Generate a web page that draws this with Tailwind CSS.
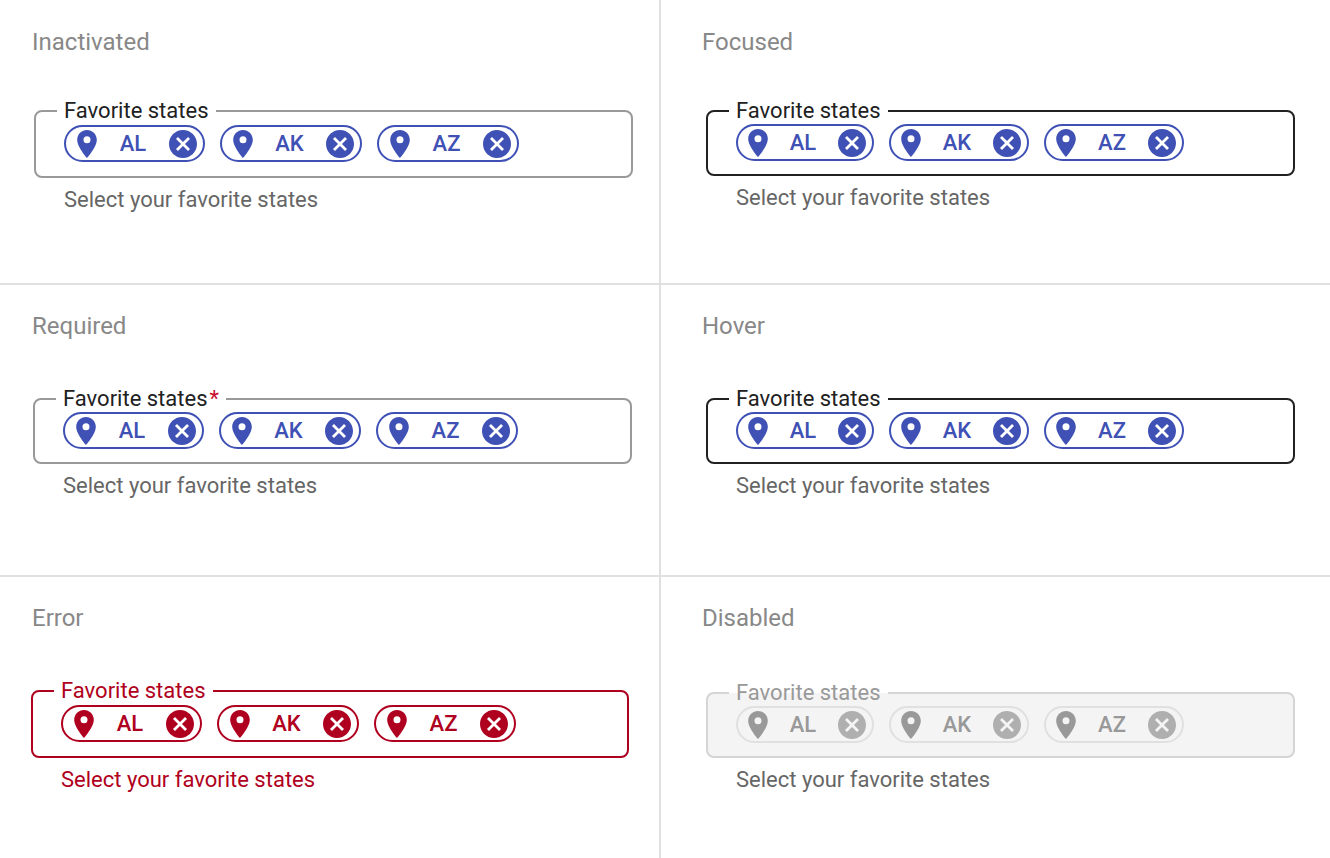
<!DOCTYPE html>
<html lang="en">
<head>
<meta charset="utf-8">
<meta name="viewport" content="width=device-width, initial-scale=1">
<title>Chip field states</title>
<script src="https://cdn.jsdelivr.net/npm/@tailwindcss/browser@4"></script>
</head>
<body class="bg-white font-[Roboto,sans-serif] text-[#212121]">
<svg class="hidden" aria-hidden="true">
  <symbol id="pin" viewBox="5 2 14 20"><path fill="currentColor" d="M12 2C8.13 2 5 5.13 5 9c0 5.25 7 13 7 13s7-7.75 7-13c0-3.87-3.13-7-7-7zm0 9.5a2.5 2.5 0 0 1 0-5 2.5 2.5 0 0 1 0 5z"/></symbol>
  <symbol id="cancel" viewBox="2 2 20 20"><path fill="currentColor" d="M12 2C6.47 2 2 6.47 2 12s4.470 10 10 10 10-4.470 10-10S17.530 2 12 2zm5 13.590L15.590 17 12 13.410 8.410 17 7 15.590 10.590 12 7 8.410 8.410 7 12 10.590 15.590 7 17 8.410 13.410 12 17 15.590z"/></symbol>
</svg>
<main class="grid min-h-screen grid-cols-[661fr_669fr] grid-rows-[285px_292px_1fr]">

  <section class="border-r-2 border-b-2 border-[#e0e0e0] pt-[26px] pr-[26px] pl-8">
    <h2 class="text-2xl text-[#888888]">Inactivated</h2>
    <fieldset class="mt-[41px] ml-[2px] rounded-lg border-2 border-[#999999] px-[21px] pt-[2px] pb-[14px]" aria-describedby="h1">
      <legend class="px-[7px] text-[22px] leading-6">Favorite states</legend>
      <ul class="ml-[7px] flex gap-[15px] text-[22px] leading-6 font-medium text-[#3f51b5]">
        <li class="flex h-[37px] w-[141px] items-center rounded-full border-2 border-[#3f51b5] pr-[6px] pl-[11px]"><svg class="h-7 w-5" aria-hidden="true"><use href="#pin"/></svg><span class="flex-1 text-center">AL</span><button type="button" aria-label="Remove AL"><svg class="size-7"><use href="#cancel"/></svg></button></li>
        <li class="flex h-[37px] w-[142px] items-center rounded-full border-2 border-[#3f51b5] pr-[6px] pl-[11px]"><svg class="h-7 w-5" aria-hidden="true"><use href="#pin"/></svg><span class="flex-1 text-center">AK</span><button type="button" aria-label="Remove AK"><svg class="size-7"><use href="#cancel"/></svg></button></li>
        <li class="flex h-[37px] w-[142px] items-center rounded-full border-2 border-[#3f51b5] pr-[6px] pl-[11px]"><svg class="h-7 w-5" aria-hidden="true"><use href="#pin"/></svg><span class="flex-1 text-center">AZ</span><button type="button" aria-label="Remove AZ"><svg class="size-7"><use href="#cancel"/></svg></button></li>
      </ul>
    </fieldset>
    <p id="h1" class="mt-[10px] ml-8 text-[22px] leading-6 text-[#666666]">Select your favorite states</p>
  </section>

  <section class="border-b-2 border-[#e0e0e0] pt-[26px] pr-[35px] pl-[41px]">
    <h2 class="text-2xl text-[#888888]">Focused</h2>
    <fieldset class="mt-[41px] ml-1 rounded-lg border-2 border-[#212121] px-[21px] pt-px pb-[13px]" aria-describedby="h2">
      <legend class="px-[7px] text-[22px] leading-6">Favorite states</legend>
      <ul class="ml-[7px] flex gap-[15px] text-[22px] leading-6 font-medium text-[#3f51b5]">
        <li class="flex h-[37px] w-[138px] items-center rounded-full border-2 border-[#3f51b5] pr-[6px] pl-[10px]"><svg class="h-7 w-5" aria-hidden="true"><use href="#pin"/></svg><span class="flex-1 text-center">AL</span><button type="button" aria-label="Remove AL"><svg class="size-7"><use href="#cancel"/></svg></button></li>
        <li class="flex h-[37px] w-[140px] items-center rounded-full border-2 border-[#3f51b5] pr-[6px] pl-[10px]"><svg class="h-7 w-5" aria-hidden="true"><use href="#pin"/></svg><span class="flex-1 text-center">AK</span><button type="button" aria-label="Remove AK"><svg class="size-7"><use href="#cancel"/></svg></button></li>
        <li class="flex h-[37px] w-[140px] items-center rounded-full border-2 border-[#3f51b5] pr-[6px] pl-[10px]"><svg class="h-7 w-5" aria-hidden="true"><use href="#pin"/></svg><span class="flex-1 text-center">AZ</span><button type="button" aria-label="Remove AZ"><svg class="size-7"><use href="#cancel"/></svg></button></li>
      </ul>
    </fieldset>
    <p id="h2" class="mt-[10px] ml-[34px] text-[22px] leading-6 text-[#666666]">Select your favorite states</p>
  </section>

  <section class="border-r-2 border-b-2 border-[#e0e0e0] pt-[25px] pr-[27px] pl-8">
    <h2 class="text-2xl text-[#888888]">Required</h2>
    <fieldset class="mt-[45px] ml-px rounded-lg border-2 border-[#999999] px-[21px] pt-px pb-[13px]" aria-describedby="h3">
      <legend class="px-[7px] text-[22px] leading-6">Favorite states<span class="ml-[2px] text-[#c8102e]">*</span></legend>
      <ul class="ml-[7px] flex gap-[15px] text-[22px] leading-6 font-medium text-[#3f51b5]">
        <li class="flex h-[37px] w-[141px] items-center rounded-full border-2 border-[#3f51b5] pr-[6px] pl-[11px]"><svg class="h-7 w-5" aria-hidden="true"><use href="#pin"/></svg><span class="flex-1 text-center">AL</span><button type="button" aria-label="Remove AL"><svg class="size-7"><use href="#cancel"/></svg></button></li>
        <li class="flex h-[37px] w-[142px] items-center rounded-full border-2 border-[#3f51b5] pr-[6px] pl-[11px]"><svg class="h-7 w-5" aria-hidden="true"><use href="#pin"/></svg><span class="flex-1 text-center">AK</span><button type="button" aria-label="Remove AK"><svg class="size-7"><use href="#cancel"/></svg></button></li>
        <li class="flex h-[37px] w-[142px] items-center rounded-full border-2 border-[#3f51b5] pr-[6px] pl-[11px]"><svg class="h-7 w-5" aria-hidden="true"><use href="#pin"/></svg><span class="flex-1 text-center">AZ</span><button type="button" aria-label="Remove AZ"><svg class="size-7"><use href="#cancel"/></svg></button></li>
      </ul>
    </fieldset>
    <p id="h3" class="mt-[10px] ml-[31px] text-[22px] leading-6 text-[#666666]">Select your favorite states</p>
  </section>

  <section class="border-b-2 border-[#e0e0e0] pt-[25px] pr-[35px] pl-[41px]">
    <h2 class="text-2xl text-[#888888]">Hover</h2>
    <fieldset class="mt-[45px] ml-1 rounded-lg border-2 border-[#212121] px-[21px] pt-px pb-[13px]" aria-describedby="h4">
      <legend class="px-[7px] text-[22px] leading-6">Favorite states</legend>
      <ul class="ml-[7px] flex gap-[15px] text-[22px] leading-6 font-medium text-[#3f51b5]">
        <li class="flex h-[37px] w-[138px] items-center rounded-full border-2 border-[#3f51b5] pr-[6px] pl-[10px]"><svg class="h-7 w-5" aria-hidden="true"><use href="#pin"/></svg><span class="flex-1 text-center">AL</span><button type="button" aria-label="Remove AL"><svg class="size-7"><use href="#cancel"/></svg></button></li>
        <li class="flex h-[37px] w-[140px] items-center rounded-full border-2 border-[#3f51b5] pr-[6px] pl-[10px]"><svg class="h-7 w-5" aria-hidden="true"><use href="#pin"/></svg><span class="flex-1 text-center">AK</span><button type="button" aria-label="Remove AK"><svg class="size-7"><use href="#cancel"/></svg></button></li>
        <li class="flex h-[37px] w-[140px] items-center rounded-full border-2 border-[#3f51b5] pr-[6px] pl-[10px]"><svg class="h-7 w-5" aria-hidden="true"><use href="#pin"/></svg><span class="flex-1 text-center">AZ</span><button type="button" aria-label="Remove AZ"><svg class="size-7"><use href="#cancel"/></svg></button></li>
      </ul>
    </fieldset>
    <p id="h4" class="mt-[10px] ml-[34px] text-[22px] leading-6 text-[#666666]">Select your favorite states</p>
  </section>

  <section class="border-r-2 border-[#e0e0e0] pt-[25px] pr-[30px] pl-[31px]">
    <h2 class="ml-px text-2xl text-[#888888]">Error</h2>
    <fieldset class="mt-[45px] rounded-lg border-2 border-[#b00020] px-[21px] pt-[2px] pb-[14px] text-[#b00020]" aria-describedby="h5">
      <legend class="px-[7px] text-[22px] leading-6">Favorite states</legend>
      <ul class="ml-[7px] flex gap-[15px] text-[22px] leading-6 font-medium">
        <li class="flex h-[37px] w-[141px] items-center rounded-full border-2 border-[#b00020] pr-[6px] pl-[11px]"><svg class="h-7 w-5" aria-hidden="true"><use href="#pin"/></svg><span class="flex-1 text-center">AL</span><button type="button" aria-label="Remove AL"><svg class="size-7"><use href="#cancel"/></svg></button></li>
        <li class="flex h-[37px] w-[142px] items-center rounded-full border-2 border-[#b00020] pr-[6px] pl-[11px]"><svg class="h-7 w-5" aria-hidden="true"><use href="#pin"/></svg><span class="flex-1 text-center">AK</span><button type="button" aria-label="Remove AK"><svg class="size-7"><use href="#cancel"/></svg></button></li>
        <li class="flex h-[37px] w-[142px] items-center rounded-full border-2 border-[#b00020] pr-[6px] pl-[11px]"><svg class="h-7 w-5" aria-hidden="true"><use href="#pin"/></svg><span class="flex-1 text-center">AZ</span><button type="button" aria-label="Remove AZ"><svg class="size-7"><use href="#cancel"/></svg></button></li>
      </ul>
    </fieldset>
    <p id="h5" class="mt-[10px] ml-[30px] text-[22px] leading-6 text-[#b00020]">Select your favorite states</p>
  </section>

  <section class="pt-[25px] pr-[35px] pl-[41px]">
    <h2 class="text-2xl text-[#888888]">Disabled</h2>
    <fieldset disabled class="mt-[47px] ml-1 rounded-lg border-2 border-[#d5d5d5] bg-[#f4f4f4] px-[21px] pt-px pb-[13px] text-[#999999]" aria-describedby="h6">
      <legend class="bg-linear-to-b from-white from-50% to-[#f4f4f4] to-50% px-[7px] text-[22px] leading-6">Favorite states</legend>
      <ul class="ml-[7px] flex gap-[15px] text-[22px] leading-6 font-medium">
        <li class="flex h-[37px] w-[138px] items-center rounded-full border-2 border-[#e0e0e0] pr-[6px] pl-[10px]"><svg class="h-7 w-5" aria-hidden="true"><use href="#pin"/></svg><span class="flex-1 text-center">AL</span><button type="button" disabled class="text-[#afafaf]" aria-label="Remove AL"><svg class="size-7"><use href="#cancel"/></svg></button></li>
        <li class="flex h-[37px] w-[140px] items-center rounded-full border-2 border-[#e0e0e0] pr-[6px] pl-[10px]"><svg class="h-7 w-5" aria-hidden="true"><use href="#pin"/></svg><span class="flex-1 text-center">AK</span><button type="button" disabled class="text-[#afafaf]" aria-label="Remove AK"><svg class="size-7"><use href="#cancel"/></svg></button></li>
        <li class="flex h-[37px] w-[140px] items-center rounded-full border-2 border-[#e0e0e0] pr-[6px] pl-[10px]"><svg class="h-7 w-5" aria-hidden="true"><use href="#pin"/></svg><span class="flex-1 text-center">AZ</span><button type="button" disabled class="text-[#afafaf]" aria-label="Remove AZ"><svg class="size-7"><use href="#cancel"/></svg></button></li>
      </ul>
    </fieldset>
    <p id="h6" class="mt-[10px] ml-[34px] text-[22px] leading-6 text-[#666666]">Select your favorite states</p>
  </section>
</main>
</body>
</html>
